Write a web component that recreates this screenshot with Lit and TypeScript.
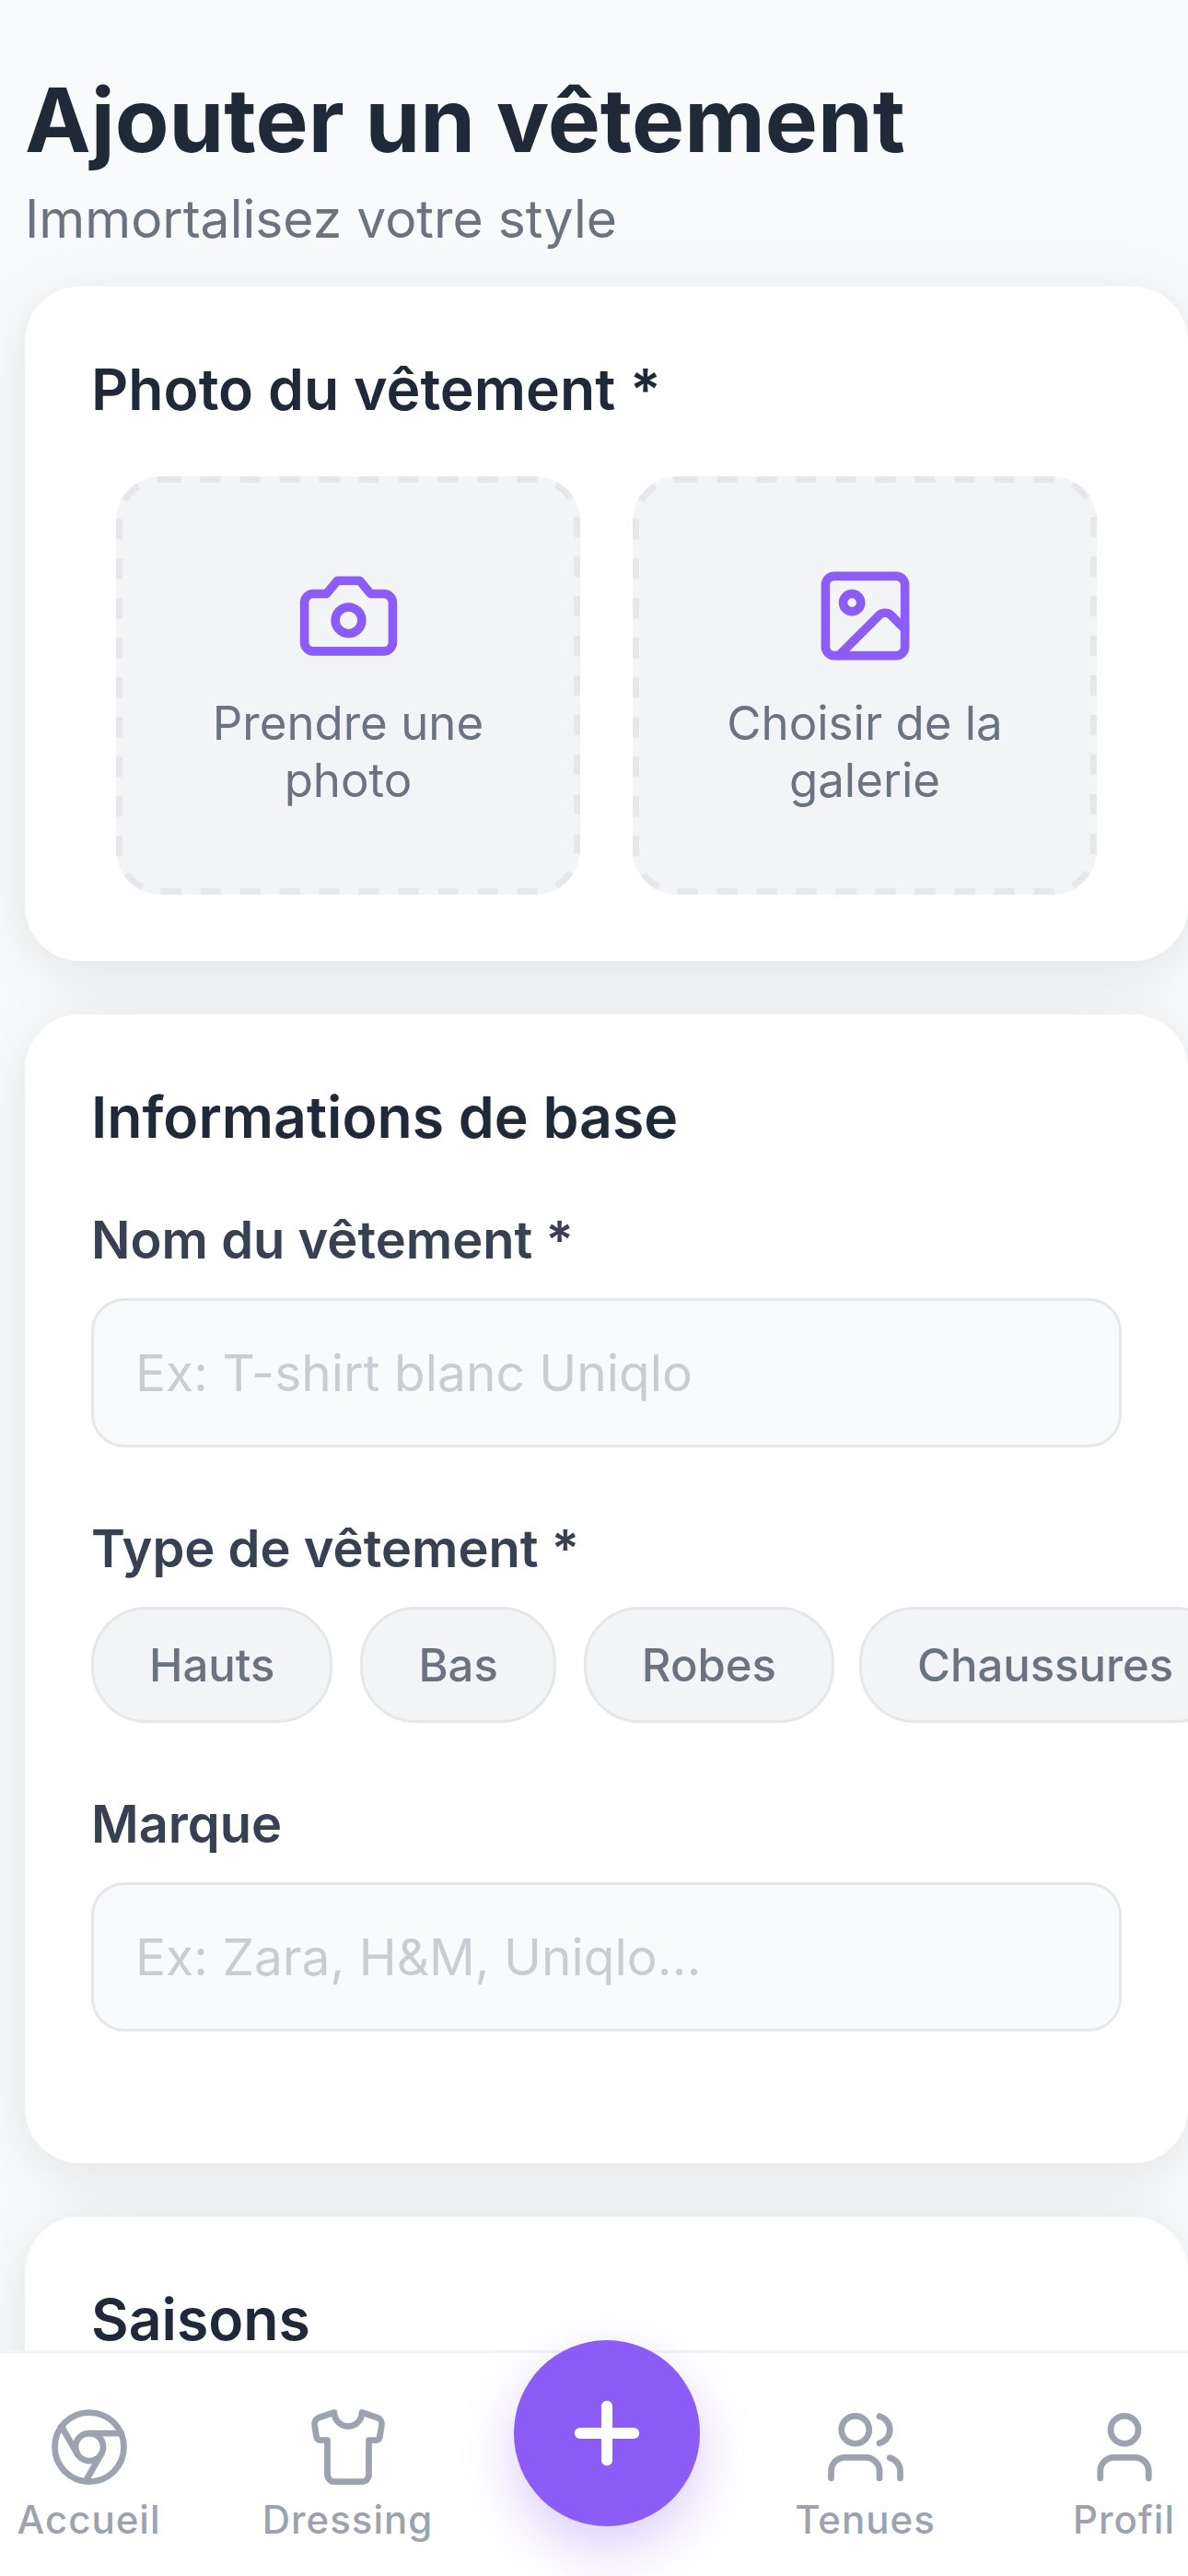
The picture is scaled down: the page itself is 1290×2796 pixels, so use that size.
import { LitElement, html, css, svg } from "lit";
import { customElement } from "lit/decorators.js";

const icons = {
  home: svg`<circle cx="12" cy="12" r="10"/><circle cx="12" cy="12" r="4"/><line x1="21.17" y1="8" x2="12" y2="8"/><line x1="3.95" y1="6.06" x2="8.54" y2="14"/><line x1="10.88" y1="21.94" x2="15.46" y2="14"/>`,
  shirt: svg`<path d="M20.38 3.46 16 2a4 4 0 0 1-8 0L3.62 3.46a2 2 0 0 0-1.34 2.23l.58 3.47a1 1 0 0 0 .99.84H6v10c0 1.1.9 2 2 2h8a2 2 0 0 0 2-2V10h2.15a1 1 0 0 0 .99-.84l.58-3.47a2 2 0 0 0-1.34-2.23z"/>`,
  users: svg`<path d="M16 21v-2a4 4 0 0 0-4-4H6a4 4 0 0 0-4 4v2"/><circle cx="9" cy="7" r="4"/><path d="M22 21v-2a4 4 0 0 0-3-3.87"/><path d="M16 3.13a4 4 0 0 1 0 7.75"/>`,
  user: svg`<path d="M19 21v-2a4 4 0 0 0-4-4H9a4 4 0 0 0-4 4v2"/><circle cx="12" cy="7" r="4"/>`,
  camera: svg`<path d="M14.5 4h-5L7 7H4a2 2 0 0 0-2 2v9a2 2 0 0 0 2 2h16a2 2 0 0 0 2-2V9a2 2 0 0 0-2-2h-3l-2.5-3z"/><circle cx="12" cy="13" r="3"/>`,
  image: svg`<rect x="3" y="3" width="18" height="18" rx="2"/><circle cx="9" cy="9" r="2"/><path d="m21 15-3.086-3.086a2 2 0 0 0-2.828 0L6 21"/>`,
  plus: svg`<path d="M5 12h14"/><path d="M12 5v14"/>`,
};

const icon = (body: unknown, cls: string) => html`<svg class=${cls} viewBox="0 0 24 24" fill="none" stroke="currentColor" stroke-linecap="round" stroke-linejoin="round">${body}</svg>`;

@customElement("app-root")
export class AppRoot extends LitElement {
  static styles = css`
    :host {
      display: block;
      font-family: Inter, "Noto Sans", sans-serif;
    }

    .screen {
      position: relative;
      height: 2796px;
      overflow: hidden;
      background: #f9fafb;
      padding: 58px 0 0 27px;
      box-sizing: border-box;
    }

    h1 {
      margin: 0;
      font-size: 96px;
      line-height: 144px;
      font-weight: 700;
      color: #1f2937;
    }

    .subtitle {
      margin: 0 0 37px;
      font-size: 57px;
      line-height: 72px;
      color: #6b7280;
    }

    .card {
      background: #fff;
      border-radius: 60px;
      padding: 72px;
      margin-bottom: 58px;
      box-shadow: 0 12px 72px rgba(0, 0, 0, 0.1);
    }

    .card.clipped {
      min-height: 600px;
    }

    h2 {
      margin: 0 0 56px;
      font-size: 62.5px;
      line-height: 78px;
      font-weight: 600;
      color: #1f2937;
    }

    .photo-row {
      display: grid;
      grid-template-columns: 504px 504px;
      gap: 57px;
      padding: 0 27px;
    }

    .photo-btn {
      position: relative;
      height: 454px;
      border-radius: 48px;
      background: #f3f4f6;
      display: flex;
      flex-direction: column;
      align-items: center;
      justify-content: center;
      gap: 28px;
      font-size: 51px;
      line-height: 62px;
      color: #6b7280;
      text-align: center;
    }

    .dash {
      position: absolute;
      inset: 0;
      width: 100%;
      height: 100%;
    }

    .dash rect {
      fill: none;
      stroke: #e5e7eb;
      stroke-width: 7;
      stroke-dasharray: 22 21;
    }

    .photo-icon {
      width: 115px;
      height: 115px;
      color: #8b5cf6;
      stroke-width: 2;
    }

    .field-label {
      margin: 0 0 24px;
      font-size: 56px;
      line-height: 78px;
      font-weight: 600;
      color: #374151;
    }

    .input {
      height: 162px;
      box-sizing: border-box;
      border: 3px solid #e5e7eb;
      border-radius: 36px;
      background: #f9fafb;
      padding: 0 45px;
      display: flex;
      align-items: center;
      font-size: 55px;
      color: #c9cdd3;
    }

    .field {
      margin-bottom: 71px;
    }

    .chips {
      display: flex;
      gap: 30px;
    }

    .chip {
      flex: none;
      height: 126px;
      box-sizing: border-box;
      border: 3px solid #e5e7eb;
      border-radius: 60px;
      background: #f3f4f6;
      padding: 0 60px;
      display: flex;
      align-items: center;
      font-size: 49px;
      font-weight: 500;
      color: #6b7280;
    }

    .chip:last-child {
      margin-left: -3px;
    }

    nav {
      position: absolute;
      left: 0;
      right: 0;
      bottom: 0;
      height: 245px;
      box-sizing: border-box;
      background: #fff;
      border-top: 3px solid #f3f4f6;
    }

    .tabs {
      display: grid;
      grid-template-columns: repeat(5, 281px);
      width: 1405px;
      margin-left: -44px;
      padding-top: 57px;
    }

    .tab {
      display: flex;
      flex-direction: column;
      align-items: center;
      gap: 7px;
      font-size: 42px;
      line-height: 54px;
      font-weight: 500;
      letter-spacing: 1px;
      color: #9ca3af;
    }

    .tab-icon {
      width: 90px;
      height: 90px;
      stroke-width: 1.8;
    }

    .fab {
      justify-self: center;
      width: 202px;
      height: 202px;
      margin-top: -71px;
      border-radius: 50%;
      background: #8b5cf6;
      color: #fff;
      display: flex;
      align-items: center;
      justify-content: center;
      box-shadow: 0 24px 60px rgba(139, 92, 246, 0.3);
    }

    .fab-icon {
      width: 100px;
      height: 100px;
      stroke-width: 2.9;
    }
  `;

  private photoBtn(body: unknown, first: string, second: string) {
    return html`
      <div class="photo-btn">
        <svg class="dash" viewBox="0 0 504 454"><rect x="3.5" y="3.5" width="497" height="447" rx="45" /></svg>
        ${icon(body, "photo-icon")}
        <span>${first}<br />${second}</span>
      </div>
    `;
  }

  render() {
    const chips = ["Hauts", "Bas", "Robes", "Chaussures"];
    return html`
      <div class="screen">
        <h1>Ajouter un vêtement</h1>
        <p class="subtitle">Immortalisez votre style</p>

        <section class="card">
          <h2>Photo du vêtement *</h2>
          <div class="photo-row">
            ${this.photoBtn(icons.camera, "Prendre une", "photo")}
            ${this.photoBtn(icons.image, "Choisir de la", "galerie")}
          </div>
        </section>

        <section class="card">
          <h2>Informations de base</h2>
          <div class="field">
            <p class="field-label">Nom du vêtement *</p>
            <div class="input">Ex: T-shirt blanc Uniqlo</div>
          </div>
          <div class="field">
            <p class="field-label">Type de vêtement *</p>
            <div class="chips">${chips.map((c) => html`<div class="chip">${c}</div>`)}</div>
          </div>
          <div class="field">
            <p class="field-label">Marque</p>
            <div class="input">Ex: Zara, H&M, Uniqlo...</div>
          </div>
        </section>

        <section class="card clipped">
          <h2>Saisons</h2>
        </section>

        <nav>
          <div class="tabs">
            <div class="tab">${icon(icons.home, "tab-icon")}<span>Accueil</span></div>
            <div class="tab">${icon(icons.shirt, "tab-icon")}<span>Dressing</span></div>
            <div class="fab">${icon(icons.plus, "fab-icon")}</div>
            <div class="tab">${icon(icons.users, "tab-icon")}<span>Tenues</span></div>
            <div class="tab">${icon(icons.user, "tab-icon")}<span>Profil</span></div>
          </div>
        </nav>
      </div>
    `;
  }
}
